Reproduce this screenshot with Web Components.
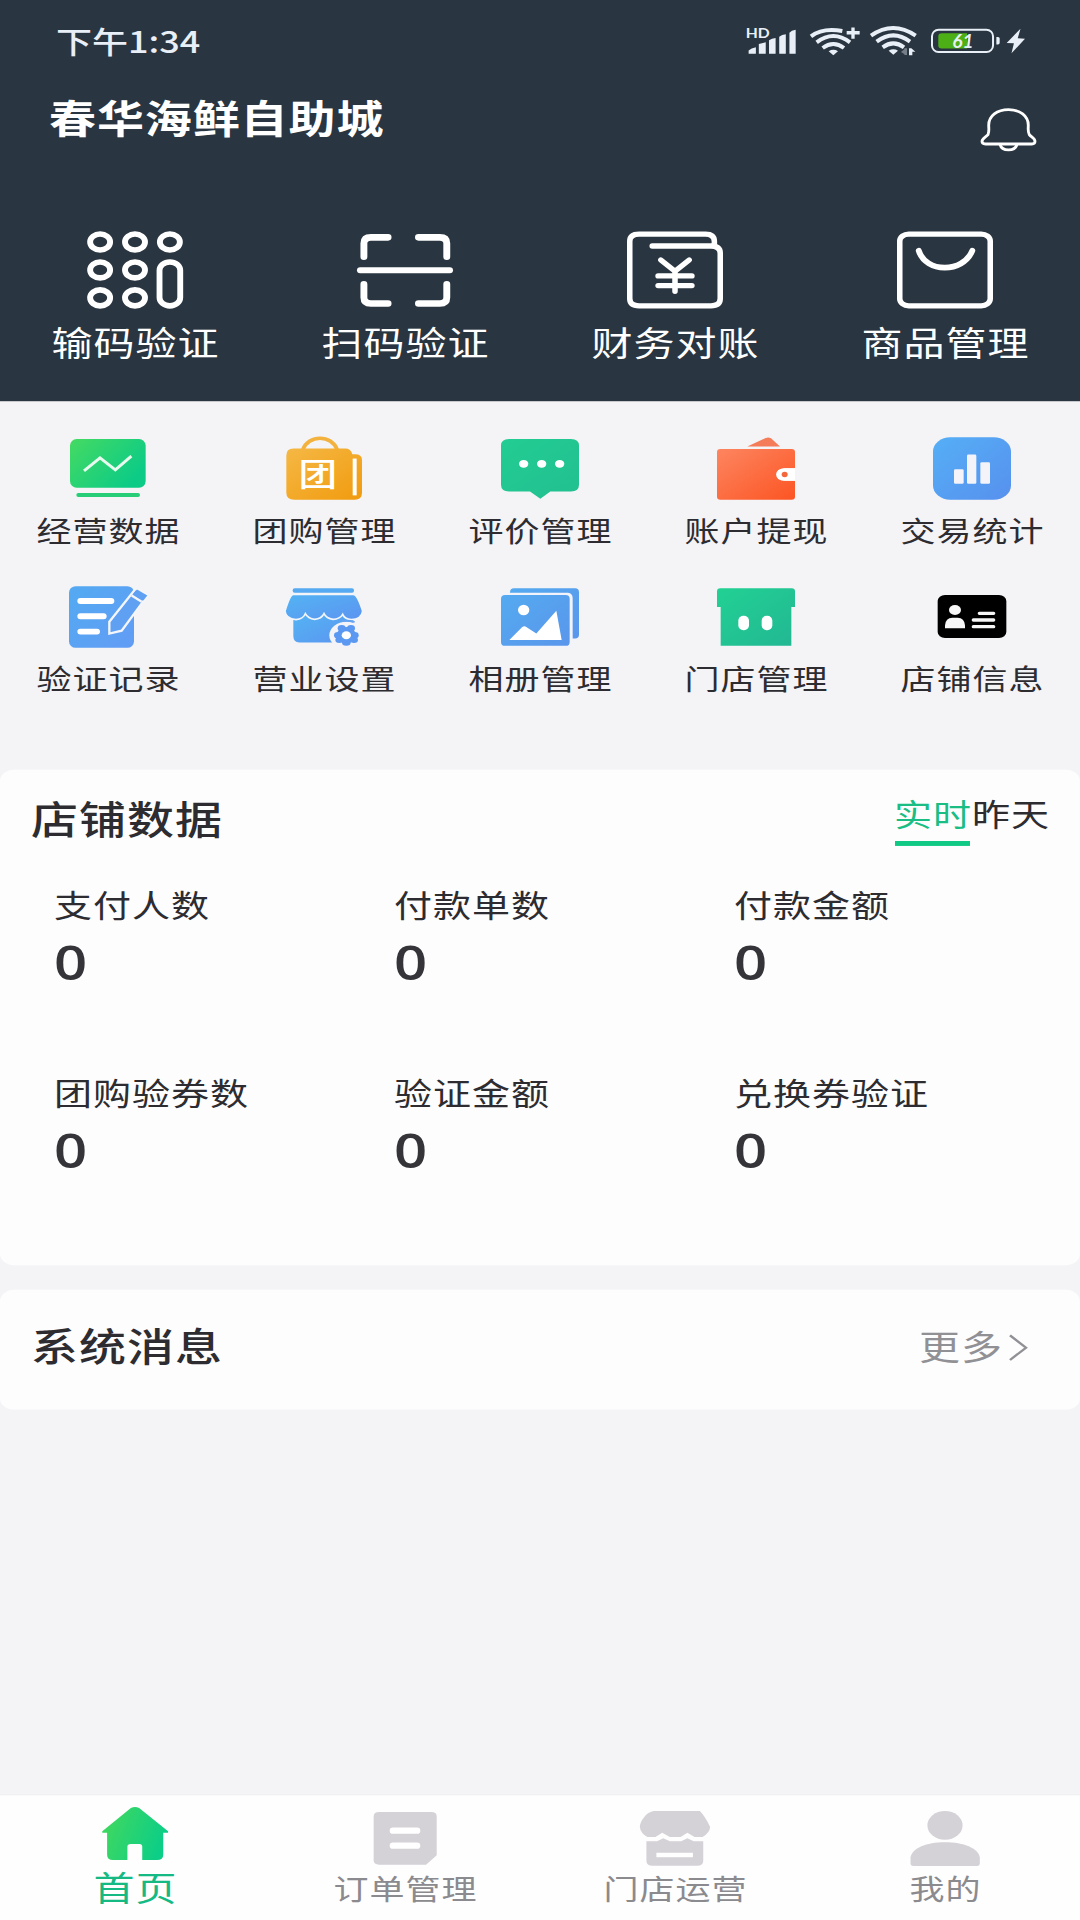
<!DOCTYPE html>
<html lang="zh-CN">
<head>
<meta charset="utf-8">
<title>春华海鲜自助城</title>
<style>
  html, body {
    margin: 0;
    width: 1080px;
    height: 1920px;
    overflow: hidden;
    background: #f4f3f6;
  }
</style>
</head>
<body>
<merchant-app>
  <app-header slot="header">
    春华海鲜自助城
    <action-item slot="actions" icon="keypad">输码验证</action-item>
    <action-item slot="actions" icon="scan">扫码验证</action-item>
    <action-item slot="actions" icon="finance">财务对账</action-item>
    <action-item slot="actions" icon="goods">商品管理</action-item>
  </app-header>

  <menu-grid>
    <menu-item icon="monitor">经营数据</menu-item>
    <menu-item icon="groupbuy">团购管理</menu-item>
    <menu-item icon="comment">评价管理</menu-item>
    <menu-item icon="wallet">账户提现</menu-item>
    <menu-item icon="chart">交易统计</menu-item>
    <menu-item icon="record">验证记录</menu-item>
    <menu-item icon="settings">营业设置</menu-item>
    <menu-item icon="album">相册管理</menu-item>
    <menu-item icon="store">门店管理</menu-item>
    <menu-item icon="idcard">店铺信息</menu-item>
  </menu-grid>

  <data-card>
    <span slot="title">店铺数据</span>
    <card-tab slot="tabs" active>实时</card-tab>
    <card-tab slot="tabs">昨天</card-tab>
    <stat-item value="0">支付人数</stat-item>
    <stat-item value="0">付款单数</stat-item>
    <stat-item value="0">付款金额</stat-item>
    <stat-item value="0">团购验券数</stat-item>
    <stat-item value="0">验证金额</stat-item>
    <stat-item value="0">兑换券验证</stat-item>
  </data-card>

  <message-card>
    系统消息
    <span slot="more">更多</span>
  </message-card>

  <nav-bar slot="footer">
    <nav-item icon="home" active>首页</nav-item>
    <nav-item icon="orders">订单管理</nav-item>
    <nav-item icon="shop">门店运营</nav-item>
    <nav-item icon="mine">我的</nav-item>
  </nav-bar>
</merchant-app>

<script>
// every icon: width, height, viewBox, markup
const ICONS = {
  signal: [50, 32, '80 84 152 80', `
    <text x="79" y="116" font-family="Lato" font-weight="700" font-size="38" textLength="73" lengthAdjust="spacingAndGlyphs">HD</text>
    <path d="M88 163v-10q8-8 22-10v20zM119 163v-30l21-5v35zM150 163v-41q8-6 20-7v48zM181 163v-52q8-7 20-8v60zM212 163v-64q6-8 19-9v73z"/>`],
  wifiPlus: [50, 34, '269 81 150 84', `
    <g fill="none" stroke="currentColor" stroke-width="12">
      <path d="M272 109q35-27 94-16M289 127q50-38 100 0M307 144q32-24 64 0"/>
      <path d="M398 82v34M379 98h39" stroke-width="10"/>
    </g>
    <path d="M325 154q14-9 28 0l-14 12z"/>`],
  wifiData: [47, 34, '449 83 141 84', `
    <g fill="none" stroke="currentColor" stroke-width="12">
      <path d="M452 109q66-46 134 0M469 127q50-38 100 0M487 144q32-24 64 0"/>
    </g>
    <path d="M505 154q14-9 28 0l-14 12z"/>
    <path d="M556 147v20l-14-9zM552 147h8v20h-8z" opacity=".4"/>
    <path d="M566 147h7l12 10h-9v11h-10z"/>`],
  battery: [69, 30, '632 88 208 75', `
    <rect x="635" y="91" width="184" height="68" rx="20" fill="none" stroke="currentColor" stroke-width="6"/>
    <path d="M664 102h77v46h-77q-10 0-10-10v-26q0-10 10-10z" fill="#4caf16"/>
    <path d="M829 113h5q5 0 5 5v13q0 5-5 5h-5z"/>
    <text x="696" y="146" font-family="Lato" font-weight="700" font-style="italic" font-size="57" textLength="64" lengthAdjust="spacingAndGlyphs">61</text>`],
  bolt: [18, 30, '862 88 52 74', `<path d="M901 88l-40 43 21 1-7 30 39-44-21-1z"/>`],
  bell: [55, 52, '782 325 164 128', `
    <g fill="none" stroke="currentColor" stroke-width="8.5">
      <path d="M803 404C807 392 805 388 805 376C805 348 830 329 864 329S923 348 923 376C923 388 921 394 926 404C931 411 943 415 943 424Q943 432 934 432H795Q785 432 785 424C785 415 797 411 803 404Z"/>
      <path d="M839 434C844 455 884 455 889 434"/>
    </g>`],

  keypad: [96, 94, '253 65 278 232', `
    <g fill="none" stroke="currentColor" stroke-width="17">
      <ellipse cx="291" cy="97" rx="29" ry="24"/><ellipse cx="392" cy="97" rx="29" ry="24"/><ellipse cx="493" cy="97" rx="29" ry="24"/>
      <ellipse cx="291" cy="181" rx="29" ry="24"/><ellipse cx="392" cy="181" rx="29" ry="24"/>
      <ellipse cx="291" cy="265" rx="29" ry="24"/><ellipse cx="392" cy="265" rx="29" ry="24"/>
      <rect x="463" y="157" width="60" height="132" rx="30" ry="25"/>
    </g>`],
  scan: [96, 94, '1037 65 278 232', `
    <g fill="none" stroke="currentColor" stroke-width="20" stroke-linecap="round">
      <path d="M1057 141v-40q0-18 20-18h50M1215 83h62q20 0 20 18v40M1057 224v40q0 18 20 18h50M1215 282h62q20 0 20-18v-40"/>
      <path d="M1046 182h260" stroke-width="18"/>
    </g>`],
  finance: [96, 94, '253 65 278 232', `
    <g fill="none" stroke="currentColor" stroke-width="16" stroke-linecap="round" stroke-linejoin="round">
      <path d="M326 109h170q27 0 27 22v136q0 22-27 22h-208q-27 0-27-22v-172q0-22 27-22h192q26 0 26 22v14"/>
      <path d="M351 151l41 34 41-34M392 185v60M343 199h98M343 228h98"/>
    </g>`],
  goods: [96, 94, '1037 65 278 232', `
    <g fill="none" stroke="currentColor" stroke-width="16" stroke-linecap="round">
      <rect x="1045" y="73" width="262" height="216" rx="26" ry="21"/>
      <path d="M1100 123C1120 190 1228 192 1255 123" stroke-width="17"/>
    </g>`],

  monitor: [78, 76, '207 52 234 188', `
    <defs><linearGradient id="g" x2="1" y2=".6"><stop stop-color="#45da62"/><stop offset="1" stop-color="#0bcb87"/></linearGradient></defs>
    <rect x="210" y="57" width="227" height="147" rx="20" fill="url(#g)"/>
    <rect x="229" y="220" width="191" height="12" rx="6" fill="#28ce77"/>
    <path d="M252 153l48-39 46 36 48-41" fill="none" stroke="#e9fbef" stroke-width="9"/>`],
  groupbuy: [78, 76, '855 52 234 188', `
    <defs><linearGradient id="g" x2="1" y2="1"><stop stop-color="#f5b845"/><stop offset="1" stop-color="#f19b0e"/></linearGradient></defs>
    <path d="M908 90C925 43 995 43 1012 90" fill="none" stroke="#f2b23d" stroke-width="11"/>
    <path d="M880 86h155q18 0 22 17h8q21 0 21 18v98q0 21-22 21h-181q-24 0-24-21v-112q0-21 21-21z" fill="url(#g)"/>
    <path d="M1064 116v111" stroke="#fff" stroke-width="12"/>
    <text transform="translate(954 199) scale(1.22 1)" text-anchor="middle" font-size="95" font-weight="500" fill="#fff">团</text>`],
  comment: [78, 76, '243 52 234 188', `
    <defs><linearGradient id="g" x2="1" y2="1"><stop stop-color="#22cd92"/><stop offset="1" stop-color="#22bf90"/></linearGradient></defs>
    <path d="M267 57h186q24 0 24 20v118q0 20-24 20h-62l-30 22-31-22h-63q-24 0-24-20v-118q0-20 24-20z" fill="url(#g)"/>
    <g fill="#fff"><ellipse cx="311" cy="132" rx="14" ry="12"/><ellipse cx="365" cy="132" rx="14" ry="12"/><ellipse cx="419" cy="132" rx="14" ry="12"/></g>`],
  wallet: [78, 76, '891 52 234 188', `
    <defs><linearGradient id="g" x2="1" y2="1"><stop stop-color="#fd8560"/><stop offset="1" stop-color="#fc5523"/></linearGradient></defs>
    <path d="M982 80l55-26q8-4 16 1l27 25z" fill="#f47c58"/>
    <path d="M901 87h214q10 0 10 9v49h-32q-24 2-24 19t24 19h32v48q0 9-10 9h-214q-10 0-10-9v-135q0-9 10-9z" fill="url(#g)"/>
    <path d="M1125 145h-30q-26 1-26 19t26 19h30z" fill="#fff"/>
    <ellipse cx="1094" cy="164" rx="9" ry="8" fill="#f4673c"/>`],
  chart: [78, 76, '339 52 234 188', `
    <defs><linearGradient id="g" x2="1" y2="1"><stop stop-color="#55aff6"/><stop offset="1" stop-color="#5790ee"/></linearGradient></defs>
    <rect x="339" y="52" width="234" height="188" rx="52" ry="43" fill="url(#g)"/>
    <g fill="#f4f3f9"><rect x="402" y="148" width="29" height="44" rx="4"/><rect x="441" y="104" width="28" height="88" rx="4"/><rect x="481" y="127" width="29" height="65" rx="4"/></g>`],
  record: [78, 76, '207 497 234 188', `
    <defs><linearGradient id="g" x2="1" y2="1"><stop stop-color="#53aaf2"/><stop offset="1" stop-color="#629cf5"/></linearGradient></defs>
    <rect x="207" y="498" width="195" height="186" rx="20" fill="url(#g)"/>
    <path d="M241 543h93M241 589h70M241 635h50" stroke="#fff" stroke-width="18" stroke-linecap="round"/>
    <path d="M328 605l79-99 36 20-78 106-37 9z" fill="#5fa0f3" stroke="#f4f6fb" stroke-width="7"/>
    <path d="M395 526l30 19" stroke="#f4f6fb" stroke-width="7"/>
    <path d="M411 508l31 18-12 15-32-19z" fill="#5fa0f3"/>`],
  settings: [78, 76, '855 497 234 188', `
    <defs><linearGradient id="g" x2="1" y2="1"><stop stop-color="#53b4f3"/><stop offset="1" stop-color="#5c94f1"/></linearGradient></defs>
    <rect x="878" y="504" width="184" height="14" rx="6" fill="#56aaf2"/>
    <path d="M880 580h180v88h-162q-18-2-18-20z" fill="url(#g)"/>
    <ellipse cx="1039" cy="646" rx="51" ry="41" fill="#f4f3f8"/>
    <path d="M880 523h180q12 0 28 50-3 24-34 26-21-2-26-16-8 14-29 15-20-2-27-17-8 16-28 17-20-2-28-17-6 15-28 18-31-3-33-26 15-50 25-50z" fill="url(#g)" stroke="#f2f6fb" stroke-width="5"/>
    <g fill="#5b98f1">
      <ellipse cx="1039" cy="646" rx="29" ry="25"/>
      <ellipse cx="1025" cy="625" rx="12" ry="10"/><ellipse cx="1053" cy="625" rx="12" ry="10"/>
      <ellipse cx="1014" cy="646" rx="12" ry="10"/><ellipse cx="1064" cy="646" rx="12" ry="10"/>
      <ellipse cx="1018" cy="660" rx="12" ry="9"/><ellipse cx="1062" cy="660" rx="12" ry="9"/>
      <ellipse cx="1039" cy="668" rx="13" ry="10"/>
    </g>
    <ellipse cx="1039" cy="646" rx="14" ry="12" fill="#fff"/>
    <path d="M1024 604q20-5 40 2" fill="none" stroke="#66a3f0" stroke-width="5"/>`],
  album: [78, 76, '243 497 234 188', `
    <defs><linearGradient id="g" x2="1" y2="1"><stop stop-color="#54aaf0"/><stop offset="1" stop-color="#5a96ec"/></linearGradient></defs>
    <rect x="270" y="504" width="207" height="152" rx="12" fill="url(#g)"/>
    <path d="M240 518h204q14 2 14 16v150h-214z" fill="#f2f4fa"/>
    <rect x="243" y="525" width="206" height="153" rx="12" fill="url(#g)"/>
    <ellipse cx="311" cy="570" rx="17" ry="16" fill="#fff"/>
    <path d="M268 660l38-38q7-6 14 0l29 19 60-69 16 88z" fill="#fff"/>`],
  store: [78, 76, '891 497 234 188', `
    <defs><linearGradient id="g" x2="1" y2="1"><stop stop-color="#22d193"/><stop offset="1" stop-color="#22b793"/></linearGradient></defs>
    <path d="M901 504h214q10 0 10 9v48h-11v117h-212v-117h-11v-48q0-9 10-9z" fill="url(#g)"/>
    <rect x="955" y="587" width="32" height="44" rx="15" fill="#fff"/><rect x="1025" y="587" width="32" height="44" rx="15" fill="#fff"/>`],
  idcard: [78, 76, '339 497 234 188', `
    <rect x="353" y="525" width="206" height="129" rx="22" ry="18" fill="#000"/>
    <g fill="#f7f7f7"><ellipse cx="405" cy="570" rx="18" ry="15"/>
    <path d="M375 625v-9q2-23 22-23h16q20 0 22 23v9z"/></g>
    <path d="M478 580h43M460 600h61M460 620h61" stroke="#f7f7f7" stroke-width="10" stroke-linecap="round"/>`],

  chevron: [21, 33, '0 0 21 33', '<path d="M2 1.5l16 15-16 15" fill="none" stroke="currentColor" stroke-width="2.6"/>'],

  home: [72, 73, '287.5 80 209 180', `
    <defs><linearGradient id="g" x2="1" y2=".3"><stop stop-color="#46d95b"/><stop offset="1" stop-color="#0dce86"/></linearGradient></defs>
    <path d="M380 84q12-6 24 0l84 70v4h-14v66q0 16-18 16h-43v-40q0-8-8-8h-26q-9 0-9 8v40h-42q-17 0-17-16v-66h-14v-4z" fill="url(#g)"/>`],
  orders: [72, 73, '1071.5 80 209 180', `
    <path d="M1101 96h151q16 0 16 13v117l-31 28h-136q-16 0-16-13v-132q0-13 16-13z" fill="#d4d1d7"/>
    <path d="M1141 152h70M1141 197h70" stroke="#fff" stroke-width="19" stroke-linecap="round"/>`],
  shop: [72, 73, '287.5 80 209 180', `
    <g fill="#d4d1d7">
      <path d="M330 93h134q7 7 14 18 10 16 16 30-1 17-22 30h-23l-21-13-20 13h-31l-22-13-20 13h-23q-20-11-22-30 0-14 13-30 8-13 27-18z"/>
      <path d="M309 184h31l18-9 19 9h33l18-9 18 9h28v58q0 15-18 15h-129q-18 0-18-15z"/>
    </g>
    <path d="M338 225h106" stroke="#fff" stroke-width="13"/>`],
  mine: [72, 73, '1071.5 80 209 180', `
    <g fill="#d4d1d7"><ellipse cx="1176" cy="136" rx="51" ry="43"/>
    <path d="M1076 250v-18c5-27 45-45 100-45s96 18 101 45v18q0 8-8 8h-185q-8 0-8-8z"/></g>`]
};

function define(name, html, setup) {
  customElements.define(name, class extends HTMLElement {
    constructor() {
      super();

      this.attachShadow({ mode: 'open' });
    }

    connectedCallback() {
      this.shadowRoot.innerHTML = html;
      if (setup) setup(this, this.shadowRoot);
    }
  });
}

// puts the icon named by the host's attribute above its label
function addIcon(host, root) {
  const icon = document.createElement('app-icon');
  icon.setAttribute('name', host.getAttribute('icon'));
  root.querySelector('span').before(icon);
}

define('app-icon', '', (host, root) => {
  const [width, height, viewBox, markup] = ICONS[host.getAttribute('name')];
  root.innerHTML = `
    <style>
      :host { display: block; flex: none; }
      svg { display: block; overflow: visible; fill: currentColor; }
    </style>
    <svg width="${width}" height="${height}" viewBox="${viewBox}" preserveAspectRatio="none">${markup}</svg>
  `;
});

// laid out on a tall 1080x2340 phone screen and squeezed into the window
define('merchant-app', `
  <style>
    :host {
      display: block;
      height: 1920px;
      overflow: hidden;
    }

    .screen {
      display: flex;
      flex-direction: column;
      width: 1080px;
      height: 2340px;
      margin-bottom: -420px;
      transform: scaleY(0.8205);
      transform-origin: 0 0;
      background: #f4f3f6;
      color: #2d2c30;
      font-family: "Noto Sans CJK SC", sans-serif;
      font-size: 35px;
      letter-spacing: 1px;
    }

    main {
      flex: 1;
      display: flex;
      flex-direction: column;
    }
  </style>
  <div class="screen">
    <slot name="header"></slot>
    <main><slot></slot></main>
    <slot name="footer"></slot>
  </div>
`);

define('status-bar', `
  <style>
    :host {
      display: flex;
      align-items: center;
      height: 100px;
      padding: 0 55px 0 56px;
      color: #e9eff7;
    }

    .time {
      flex: 1;
      margin-top: -3px;
      font-size: 36px;
      font-weight: 500;
      line-height: 50px;
      letter-spacing: 0;
    }

    .icons {
      display: flex;
      align-items: center;
      letter-spacing: 0;
    }

    .icons app-icon:nth-child(2) { margin-left: 14px; }
    .icons app-icon:nth-child(3) { margin-left: 10px; }
    .icons app-icon:nth-child(4) { margin-left: 14px; }
    .icons app-icon:nth-child(5) { margin-left: 7px; }
  </style>
  <div class="time">下午1:34</div>
  <div class="icons">
    <app-icon name="signal"></app-icon>
    <app-icon name="wifiPlus"></app-icon>
    <app-icon name="wifiData"></app-icon>
    <app-icon name="battery"></app-icon>
    <app-icon name="bolt"></app-icon>
  </div>
`);

define('app-header', `
  <style>
    :host {
      display: block;
      height: 489px;
      background: #293540;
      color: #fff;
    }

    .title {
      display: flex;
      align-items: center;
      justify-content: space-between;
      height: 88px;
      padding: 0 44px 0 49px;
    }

    h1 {
      margin: 0 0 5px;
      font-size: 47px;
      font-weight: 700;
      line-height: 60px;
      letter-spacing: 0.9px;
    }

    .title app-icon { margin-top: 28px; }

    .actions {
      display: grid;
      grid-template-columns: repeat(4, 1fr);
      padding-top: 94px;
    }
  </style>
  <status-bar></status-bar>
  <div class="title">
    <h1><slot></slot></h1>
    <app-icon name="bell"></app-icon>
  </div>
  <div class="actions"><slot name="actions"></slot></div>
`);

define('action-item', `
  <style>
    :host {
      display: flex;
      flex-direction: column;
      align-items: center;
      gap: 15px;
      font-size: 41px;
      line-height: 50px;
    }

    /* evens out the letter spacing after the last character */
    span { padding-left: 1px; }
  </style>
  <span><slot></slot></span>
`, addIcon);

define('menu-grid', `
  <style>
    :host {
      display: grid;
      grid-template-columns: repeat(5, 1fr);
      row-gap: 48px;
      padding: 44px 0 91px;
    }
  </style>
  <slot></slot>
`);

define('menu-item', `
  <style>
    :host {
      display: flex;
      flex-direction: column;
      align-items: center;
      gap: 15px;
      line-height: 42px;
    }

    span { padding-left: 1px; }
  </style>
  <span><slot></slot></span>
`, addIcon);

define('data-card', `
  <style>
    :host {
      display: block;
      box-sizing: border-box;
      height: 604px;
      padding-top: 28px;
      border-radius: 14px;
      background: #fdfdfe;
    }

    header {
      display: flex;
      justify-content: space-between;
      align-items: flex-start;
      height: 64px;
      padding: 0 30px 0 31px;
    }

    h2 {
      margin: 0;
      font-size: 47px;
      font-weight: 500;
      line-height: 60px;
    }

    nav { display: flex; }

    .stats {
      display: grid;
      grid-template-columns: repeat(3, 340px);
      row-gap: 102px;
      padding: 47px 0 0 54px;
    }
  </style>
  <header>
    <h2><slot name="title"></slot></h2>
    <nav><slot name="tabs"></slot></nav>
  </header>
  <div class="stats"><slot></slot></div>
`);

define('card-tab', `
  <style>
    :host {
      display: block;
      font-size: 38px;
      line-height: 50px;
    }

    span {
      display: block;
      padding-bottom: 9px;
    }

    :host([active]) { color: #1abd84; }

    :host([active])::after {
      content: '';
      display: block;
      width: 75px;
      height: 6px;
      margin-left: 1px;
      background: #10c985;
    }
  </style>
  <span><slot></slot></span>
`);

define('stat-item', `
  <style>
    :host {
      display: flex;
      flex-direction: column;
      gap: 15px;
      font-size: 38px;
      line-height: 50px;
    }

    b {
      padding-bottom: 2px;
      font: 600 58px/60px "Open Sans", sans-serif;
      color: #353438;
    }
  </style>
  <span><slot></slot></span>
  <b></b>
`, (host, root) => {
  root.querySelector('b').textContent = host.getAttribute('value');
});

define('message-card', `
  <style>
    :host {
      display: flex;
      align-items: center;
      justify-content: space-between;
      box-sizing: border-box;
      height: 146px;
      margin-top: 30px;
      padding: 0 51px 6px 31px;
      border-radius: 14px;
      background: #fdfdfe;
    }

    h2 {
      margin: 0 0 7px;
      font-size: 47px;
      font-weight: 500;
      line-height: 60px;
    }

    .more {
      display: flex;
      align-items: center;
      gap: 5px;
      color: #919094;
      font-size: 41px;
      line-height: 50px;
    }

    slot[name="more"] {
      display: block;
      margin-bottom: 4px;
    }
  </style>
  <h2><slot></slot></h2>
  <div class="more"><slot name="more"></slot><app-icon name="chevron"></app-icon></div>
`);

define('nav-bar', `
  <style>
    :host {
      display: grid;
      grid-template-columns: repeat(4, 1fr);
      box-sizing: border-box;
      height: 153px;
      padding-top: 14px;
      border-top: 1px solid #ecebee;
      background: #fefefe;
    }
  </style>
  <slot></slot>
`);

define('nav-item', `
  <style>
    :host {
      display: flex;
      flex-direction: column;
      align-items: center;
      gap: 4px;
      color: #8b8a8e;
      line-height: 44px;
    }

    :host([active]) {
      color: #15b983;
      font-size: 41px;
    }

    span { padding-left: 1px; }
    :host([active]) span { margin-top: -2px; }
  </style>
  <span><slot></slot></span>
`, addIcon);
</script>
</body>
</html>
